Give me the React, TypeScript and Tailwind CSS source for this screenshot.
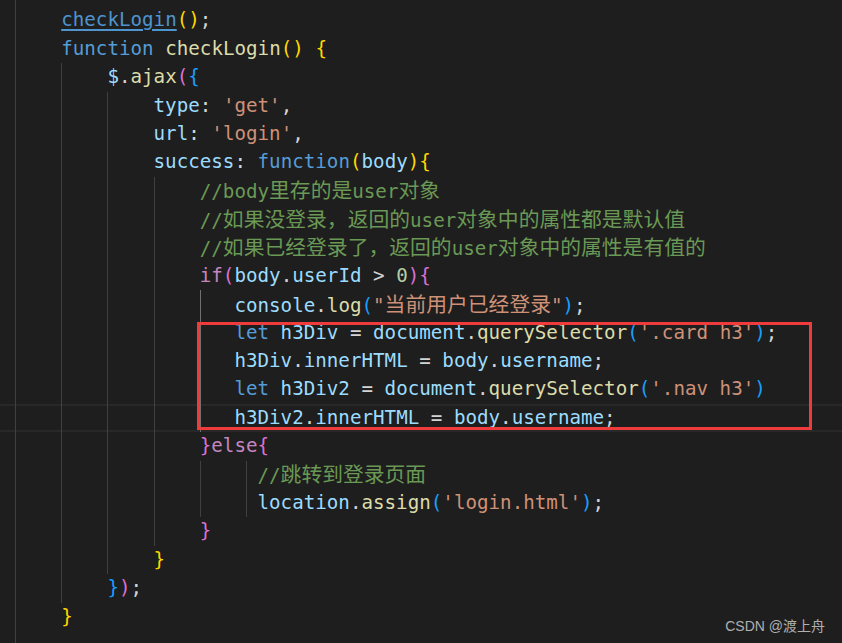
import React from "react";

type Tok = [string, string];

const C = {
  kw: "text-[#569cd6]",
  fn: "text-[#dcdcaa]",
  v: "text-[#9cdcfe]",
  s: "text-[#ce9178]",
  cm: "text-[#6a9955]",
  p: "text-[#d4d4d4]",
  g: "text-[#ffd700]",
  o: "text-[#da70d6]",
  b: "text-[#179fff]",
  ct: "text-[#c586c0]",
  n: "text-[#b5cea8]",
  link: "text-[#4e94ce] underline underline-offset-[3px] decoration-[1.5px]",
};

type Line = { sp: number; toks: Tok[]; active?: boolean; cur?: boolean };

const lines: Line[] = [
  { sp: 4, toks: [["checkLogin", C.link], ["()", C.g], [";", C.p]] },
  { sp: 4, toks: [["function", C.kw], [" ", C.p], ["checkLogin", C.fn], ["()", C.g], [" ", C.p], ["{", C.g]] },
  { sp: 8, toks: [["$", C.v], [".", C.p], ["ajax", C.fn], ["(", C.o], ["{", C.b]] },
  { sp: 12, toks: [["type", C.v], [": ", C.p], ["'get'", C.s], [",", C.p]] },
  { sp: 12, toks: [["url", C.v], [": ", C.p], ["'login'", C.s], [",", C.p]] },
  { sp: 12, toks: [["success", C.v], [": ", C.p], ["function", C.kw], ["(", C.g], ["body", C.v], [")", C.g], ["{", C.g]] },
  { sp: 16, toks: [["//body里存的是user对象", C.cm]] },
  { sp: 16, toks: [["//如果没登录，返回的user对象中的属性都是默认值", C.cm]] },
  { sp: 16, toks: [["//如果已经登录了，返回的user对象中的属性是有值的", C.cm]] },
  { sp: 16, toks: [["if", C.ct], ["(", C.o], ["body", C.v], [".", C.p], ["userId", C.v], [" > ", C.p], ["0", C.n], [")", C.o], ["{", C.o]] },
  { sp: 19, active: true, toks: [["console", C.v], [".", C.p], ["log", C.fn], ["(", C.b], ["\"当前用户已经登录\"", C.s], [")", C.b], [";", C.p]] },
  { sp: 19, active: true, toks: [["let", C.kw], [" ", C.p], ["h3Div", C.v], [" = ", C.p], ["document", C.v], [".", C.p], ["querySelector", C.fn], ["(", C.b], ["'.card h3'", C.s], [")", C.b], [";", C.p]] },
  { sp: 19, active: true, toks: [["h3Div", C.v], [".", C.p], ["innerHTML", C.v], [" = ", C.p], ["body", C.v], [".", C.p], ["username", C.v], [";", C.p]] },
  { sp: 19, active: true, toks: [["let", C.kw], [" ", C.p], ["h3Div2", C.v], [" = ", C.p], ["document", C.v], [".", C.p], ["querySelector", C.fn], ["(", C.b], ["'.nav h3'", C.s], [")", C.b]] },
  { sp: 19, active: true, cur: true, toks: [["h3Div2", C.v], [".", C.p], ["innerHTML", C.v], [" = ", C.p], ["body", C.v], [".", C.p], ["username", C.v], [";", C.p]] },
  { sp: 16, toks: [["}", C.o], ["else", C.ct], ["{", C.o]] },
  { sp: 21, toks: [["//跳转到登录页面", C.cm]] },
  { sp: 21, toks: [["location", C.v], [".", C.p], ["assign", C.fn], ["(", C.b], ["'login.html'", C.s], [")", C.b], [";", C.p]] },
  { sp: 16, toks: [["}", C.o]] },
  { sp: 12, toks: [["}", C.g]] },
  { sp: 8, toks: [["}", C.b], [")", C.o], [";", C.p]] },
  { sp: 4, toks: [["}", C.g]] },
];

const CJK = /([\u3000-\u303f\u4e00-\u9fff\uff00-\uffef]+)/;

function Text({ t, cls }: { t: string; cls: string }) {
  const parts = t.split(CJK).filter((x) => x !== "");
  return (
    <span className={cls}>
      {parts.map((x, i) =>
        CJK.test(x) ? (
          <span key={i} className="text-[20.8px] font-['Noto_Sans_CJK_SC',sans-serif]">
            {x}
          </span>
        ) : (
          <React.Fragment key={i}>{x}</React.Fragment>
        )
      )}
    </span>
  );
}

function Guides({ sp, active }: { sp: number; active?: boolean }) {
  const cells: number[] = [];
  let left = sp;
  while (left > 0) {
    cells.push(Math.min(4, left));
    left -= 4;
  }
  return (
    <>
      {cells.map((n, i) => (
        <div
          key={i}
          className={
            "h-full shrink-0 border-l " +
            (active && i === 4 ? "border-[#707070] " : "border-[#404040] ") +
            (n === 4 ? "w-[46.2px]" : n === 3 ? "w-[34.65px]" : "w-[11.55px]")
          }
        />
      ))}
    </>
  );
}

export default function App() {
  return (
    <div className="relative w-[842px] h-[643px] overflow-hidden bg-[#1e1e1e] font-['DejaVu_Sans_Mono',monospace] text-[19.2px]">
      <div className="flex flex-col h-full">
        <div className="h-[6.4px] shrink-0 pl-[15px]">
          <div className="h-full border-l border-[#404040]" />
        </div>
        {lines.map((l, i) => (
          <div
            key={i}
            className={
              "flex items-center h-[28.4px] shrink-0 pl-[15px] whitespace-pre leading-[28.4px] " +
              (l.cur ? "shadow-[inset_0_2px_0_#282828,inset_0_-2px_0_#282828]" : "")
            }
          >
            <Guides sp={l.sp} active={l.active} />
            <div>
              {l.toks.map(([t, c], j) => (
                <Text key={j} t={t} cls={c} />
              ))}
            </div>
          </div>
        ))}
        <div className="flex-1 pl-[15px]">
          <div className="h-full border-l border-[#404040]" />
        </div>
      </div>

      <div className="absolute left-[197px] top-[322px] w-[615px] h-[108px] border-[3px] border-[#ef3b3b]" />

      <div className="absolute right-[17px] top-[616px] text-[14px] leading-[20px] text-[#b0b0b0] font-['Liberation_Sans','Noto_Sans_CJK_SC',sans-serif]">
        CSDN @渡上舟
      </div>
    </div>
  );
}
